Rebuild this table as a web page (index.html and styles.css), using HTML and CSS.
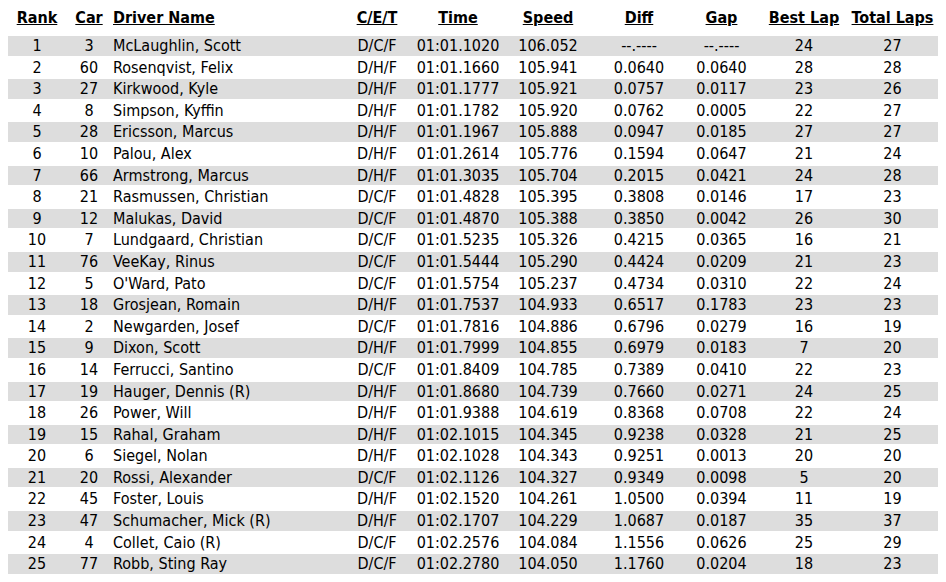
FILE: index.html
```html
<!DOCTYPE html>
<html>
<head>
<meta charset="utf-8">
<link rel="stylesheet" href="styles.css">
</head>
<body>
<table class="results">
<colgroup>
<col class="c-rank"><col class="c-car"><col class="c-driver"><col class="c-cet"><col class="c-time"><col class="c-speed"><col class="c-diff"><col class="c-gap"><col class="c-best"><col class="c-total">
</colgroup>
<thead>
<tr><th>Rank</th><th>Car</th><th class="left">Driver Name</th><th>C/E/T</th><th>Time</th><th>Speed</th><th>Diff</th><th>Gap</th><th>Best Lap</th><th>Total Laps</th></tr>
</thead>
<tbody>
<tr><td>1</td><td>3</td><td class="left">McLaughlin, Scott</td><td>D/C/F</td><td>01:01.1020</td><td>106.052</td><td>--.----</td><td>--.----</td><td>24</td><td>27</td></tr>
<tr><td>2</td><td>60</td><td class="left">Rosenqvist, Felix</td><td>D/H/F</td><td>01:01.1660</td><td>105.941</td><td>0.0640</td><td>0.0640</td><td>28</td><td>28</td></tr>
<tr><td>3</td><td>27</td><td class="left">Kirkwood, Kyle</td><td>D/H/F</td><td>01:01.1777</td><td>105.921</td><td>0.0757</td><td>0.0117</td><td>23</td><td>26</td></tr>
<tr><td>4</td><td>8</td><td class="left">Simpson, Kyffin</td><td>D/H/F</td><td>01:01.1782</td><td>105.920</td><td>0.0762</td><td>0.0005</td><td>22</td><td>27</td></tr>
<tr><td>5</td><td>28</td><td class="left">Ericsson, Marcus</td><td>D/H/F</td><td>01:01.1967</td><td>105.888</td><td>0.0947</td><td>0.0185</td><td>27</td><td>27</td></tr>
<tr><td>6</td><td>10</td><td class="left">Palou, Alex</td><td>D/H/F</td><td>01:01.2614</td><td>105.776</td><td>0.1594</td><td>0.0647</td><td>21</td><td>24</td></tr>
<tr><td>7</td><td>66</td><td class="left">Armstrong, Marcus</td><td>D/H/F</td><td>01:01.3035</td><td>105.704</td><td>0.2015</td><td>0.0421</td><td>24</td><td>28</td></tr>
<tr><td>8</td><td>21</td><td class="left">Rasmussen, Christian</td><td>D/C/F</td><td>01:01.4828</td><td>105.395</td><td>0.3808</td><td>0.0146</td><td>17</td><td>23</td></tr>
<tr><td>9</td><td>12</td><td class="left">Malukas, David</td><td>D/C/F</td><td>01:01.4870</td><td>105.388</td><td>0.3850</td><td>0.0042</td><td>26</td><td>30</td></tr>
<tr><td>10</td><td>7</td><td class="left">Lundgaard, Christian</td><td>D/C/F</td><td>01:01.5235</td><td>105.326</td><td>0.4215</td><td>0.0365</td><td>16</td><td>21</td></tr>
<tr><td>11</td><td>76</td><td class="left">VeeKay, Rinus</td><td>D/C/F</td><td>01:01.5444</td><td>105.290</td><td>0.4424</td><td>0.0209</td><td>21</td><td>23</td></tr>
<tr><td>12</td><td>5</td><td class="left">O'Ward, Pato</td><td>D/C/F</td><td>01:01.5754</td><td>105.237</td><td>0.4734</td><td>0.0310</td><td>22</td><td>24</td></tr>
<tr><td>13</td><td>18</td><td class="left">Grosjean, Romain</td><td>D/H/F</td><td>01:01.7537</td><td>104.933</td><td>0.6517</td><td>0.1783</td><td>23</td><td>23</td></tr>
<tr><td>14</td><td>2</td><td class="left">Newgarden, Josef</td><td>D/C/F</td><td>01:01.7816</td><td>104.886</td><td>0.6796</td><td>0.0279</td><td>16</td><td>19</td></tr>
<tr><td>15</td><td>9</td><td class="left">Dixon, Scott</td><td>D/H/F</td><td>01:01.7999</td><td>104.855</td><td>0.6979</td><td>0.0183</td><td>7</td><td>20</td></tr>
<tr><td>16</td><td>14</td><td class="left">Ferrucci, Santino</td><td>D/C/F</td><td>01:01.8409</td><td>104.785</td><td>0.7389</td><td>0.0410</td><td>22</td><td>23</td></tr>
<tr><td>17</td><td>19</td><td class="left">Hauger, Dennis (R)</td><td>D/H/F</td><td>01:01.8680</td><td>104.739</td><td>0.7660</td><td>0.0271</td><td>24</td><td>25</td></tr>
<tr><td>18</td><td>26</td><td class="left">Power, Will</td><td>D/H/F</td><td>01:01.9388</td><td>104.619</td><td>0.8368</td><td>0.0708</td><td>22</td><td>24</td></tr>
<tr><td>19</td><td>15</td><td class="left">Rahal, Graham</td><td>D/H/F</td><td>01:02.1015</td><td>104.345</td><td>0.9238</td><td>0.0328</td><td>21</td><td>25</td></tr>
<tr><td>20</td><td>6</td><td class="left">Siegel, Nolan</td><td>D/H/F</td><td>01:02.1028</td><td>104.343</td><td>0.9251</td><td>0.0013</td><td>20</td><td>20</td></tr>
<tr><td>21</td><td>20</td><td class="left">Rossi, Alexander</td><td>D/C/F</td><td>01:02.1126</td><td>104.327</td><td>0.9349</td><td>0.0098</td><td>5</td><td>20</td></tr>
<tr><td>22</td><td>45</td><td class="left">Foster, Louis</td><td>D/H/F</td><td>01:02.1520</td><td>104.261</td><td>1.0500</td><td>0.0394</td><td>11</td><td>19</td></tr>
<tr><td>23</td><td>47</td><td class="left">Schumacher, Mick (R)</td><td>D/H/F</td><td>01:02.1707</td><td>104.229</td><td>1.0687</td><td>0.0187</td><td>35</td><td>37</td></tr>
<tr><td>24</td><td>4</td><td class="left">Collet, Caio (R)</td><td>D/C/F</td><td>01:02.2576</td><td>104.084</td><td>1.1556</td><td>0.0626</td><td>25</td><td>29</td></tr>
<tr><td>25</td><td>77</td><td class="left">Robb, Sting Ray</td><td>D/C/F</td><td>01:02.2780</td><td>104.050</td><td>1.1760</td><td>0.0204</td><td>18</td><td>23</td></tr>
</tbody>
</table>
</body>
</html>
```

FILE: styles.css
```css
html, body {
  margin: 0;
  background: #ffffff;
}
body {
  padding: 6px 8px 0 8px;
  font-family: "DejaVu Sans Condensed", "DejaVu Sans", sans-serif;
  font-stretch: condensed;
  font-size: 16px;
  color: #000000;
}
.results {
  width: 930px;
  table-layout: fixed;
  border-collapse: separate;
  border-spacing: 0 2px;
}
.c-rank { width: 58px; }
.c-car { width: 46px; }
.c-driver { width: 226px; }
.c-cet { width: 78px; }
.c-time { width: 84px; }
.c-speed { width: 96px; }
.c-diff { width: 86px; }
.c-gap { width: 79px; }
.c-best { width: 86px; }
.c-total { width: 91px; }
.results th {
  font-weight: bold;
  text-decoration: underline;
  text-align: center;
  padding: 0 0 6px 0;
  line-height: 20px;
  white-space: nowrap;
}
.results td {
  text-align: center;
  padding: 0;
  height: 19.6px;
  line-height: 19.6px;
  white-space: nowrap;
}
.results .left {
  text-align: left;
  padding-left: 1px;
}
.results tbody tr:nth-child(odd) td {
  background: #dddddd;
}
```
